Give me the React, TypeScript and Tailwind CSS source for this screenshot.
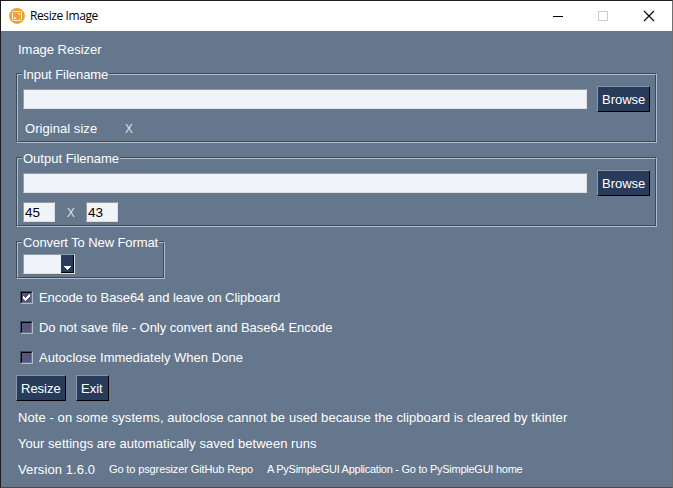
import type { ReactNode } from "react";

function Frame({ title, titleClass, className, children }: { title: string; titleClass: string; className: string; children: ReactNode }) {
  return (
    <section className={`relative ml-[15px] border border-b-[#b1bbc7] border-l-[#3f4a57] border-r-[#b1bbc7] border-t-[#3f4a57] ${className}`}>
      <div className="h-full border border-b-[#3f4a57] border-l-[#b1bbc7] border-r-[#3f4a57] border-t-[#b1bbc7]">{children}</div>
      <h2 className={`absolute -top-[7px] left-[5px] h-4 whitespace-nowrap bg-[#64778d] px-px leading-4 ${titleClass}`}>{title}</h2>
    </section>
  );
}

function Field({ value = "", className }: { value?: string; className: string }) {
  return (
    <div className={`h-5 shrink-0 border border-b-[#dedede] border-l-[#979a9e] border-r-[#dedede] border-t-[#979a9e] bg-[#f0f3f7] pl-px text-[13.5px] leading-[19px] tracking-[-0.1px] text-black ${className}`}>
      {value}
    </div>
  );
}

function Button({ label, className }: { label: string; className: string }) {
  return (
    <button className={`h-[26px] shrink-0 whitespace-nowrap border border-b-black border-l-[#8995a8] border-r-black border-t-[#8995a8] bg-[#283b5b] pl-1 text-left leading-6 text-white ${className}`}>
      <span className="block pt-px leading-[23px]">{label}</span>
    </button>
  );
}

function Check({ label, checked = false, className }: { label: string; checked?: boolean; className: string }) {
  return (
    <label className="flex h-[30px] items-center whitespace-nowrap pl-[19px]">
      <span className="mr-1.5 h-[13px] w-[13px] shrink-0 border border-b-[#b1bbc7] border-l-[#3f4a57] border-r-[#b1bbc7] border-t-[#3f4a57]">
        <span className="block h-[11px] w-[11px] border border-b-[#64778d] border-l-black border-r-[#64778d] border-t-black bg-[#59567b]">
          {checked && (
            <svg viewBox="0 0 9 9" className="h-[9px] w-[9px]" shapeRendering="crispEdges">
              <path d="M1 3h1v1h1v1h1V4h1V3h1V2h1V1h1v3H7v1H6v1H5v1H4v1H3V7H2V6H1z" fill="white" />
            </svg>
          )}
        </span>
      </span>
      <span className={`pt-0.5 ${className}`}>{label}</span>
    </label>
  );
}

export default function App() {
  return (
    <main className="flex h-[488px] w-[673px] flex-col overflow-hidden border border-b-[#4a4a4a] border-l-[#1c1c1e] border-r-[#707070] border-t-[#202020] bg-[#64778d] font-['Liberation_Sans',Arial,sans-serif] text-[13px] text-white">
      <header className="flex h-[30px] shrink-0 items-center bg-white pl-2 text-black">
        <svg viewBox="0 0 16 16" className="h-4 w-4 shrink-0">
          <circle cx="8" cy="8" r="7.9" fill="#e9a136" />
          <rect x="3.5" y="3.5" width="9" height="9" rx="0.8" fill="none" stroke="#fff0d4" strokeWidth="1" />
          <path d="M8.3 5h2.7v2.7zM5 8.3v2.7h2.7z" fill="#fff0d4" />
          <path d="M5.5 6.5l1-1M9.5 10.5l1-1" fill="none" stroke="#f7cf8e" strokeWidth=".8" />
        </svg>
        <h1 className="ml-[5px] grow font-['Open_Sans','Noto_Sans',sans-serif] text-[12px] tracking-[-0.4px]">Resize Image</h1>
        <svg width="104" height="12" viewBox="0 0 104 12" className="mr-[16px] shrink-0" fill="none">
          <path d="M1 6.5h10" stroke="black" />
          <rect x="46.5" y="1.5" width="9" height="9" stroke="#cccccc" />
          <path d="M92 1l10 10M102 1L92 11" stroke="black" strokeWidth="1.1" />
        </svg>
      </header>
      <p className="ml-[17px] mt-[11px] h-4 leading-4 tracking-[-0.02px]">Image Resizer</p>
      <Frame title="Input Filename" titleClass="tracking-[-0.05px]" className="mt-[15px] h-[70px] w-[641px] shrink-0">
        <div className="flex items-center pl-[5px] pt-[11px]">
          <Field className="w-[564px]" />
          <Button label="Browse" className="ml-[10px] w-[53px]" />
        </div>
        <div className="ml-[7px] mt-[9px] flex h-4 leading-4">
          <span className="w-[100px] tracking-[0.05px]">Original size</span>
          <span className="origin-left scale-x-90 text-[#dce1e8]">X</span>
        </div>
      </Frame>
      <Frame title="Output Filename" titleClass="tracking-[0px]" className="mt-[14px] h-[70px] w-[641px] shrink-0">
        <div className="flex items-center pl-[5px] pt-[11px]">
          <Field className="w-[564px]" />
          <Button label="Browse" className="ml-[10px] w-[53px]" />
        </div>
        <div className="ml-[5px] mt-[6px] flex h-5 items-center">
          <Field value="45" className="w-8" />
          <span className="h-5 w-[31px] pl-3 leading-[21px]"><span className="inline-block origin-left scale-x-90 text-[#dce1e8]">X</span></span>
          <Field value="43" className="w-8" />
        </div>
      </Frame>
      <Frame title="Convert To New Format" titleClass="tracking-[-0.09px]" className="mt-[14px] h-[38px] w-[149px] shrink-0">
        <div className="ml-[5px] mt-[11px] flex h-5 w-[52px] justify-end border border-b-[#dedede] border-l-[#979a9e] border-r-[#dedede] border-t-[#979a9e] bg-[#f0f3f7]">
          <button className="flex w-[13px] items-end justify-center border-b border-r border-black bg-[#283b5b] pb-[2px]">
            <svg width="7" height="4" viewBox="0 0 7 4" shapeRendering="crispEdges"><path d="M0 0h7v1H6v1H5v1H4v1H3V3H2V2H1V1H0z" fill="white" /></svg>
          </button>
        </div>
      </Frame>
      <div className="mt-[3px] shrink-0">
        <Check label="Encode to Base64 and leave on Clipboard" checked className="tracking-[-0.06px]" />
        <Check label="Do not save file - Only convert and Base64 Encode" className="tracking-[-0.03px]" />
        <Check label="Autoclose Immediately When Done" className="tracking-[0.03px]" />
      </div>
      <div className="ml-[15px] mt-[3px] flex gap-[10px]">
        <Button label="Resize" className="w-[50px]" />
        <Button label="Exit" className="w-[33px]" />
      </div>
      <footer className="ml-[17px] mt-[9px] whitespace-nowrap leading-4">
        <p className="tracking-[0.08px]">Note - on some systems, autoclose cannot be used because the clipboard is cleared by tkinter</p>
        <p className="mt-[10px] tracking-[0.04px]">Your settings are automatically saved between runs</p>
        <div className="mt-[10px] flex">
          <span className="w-[91px] tracking-[0.1px]">Version 1.6.0</span>
          <a className="-mt-px w-[158px] text-[11px] tracking-[-0.12px]">Go to psgresizer GitHub Repo</a>
          <a className="-mt-px text-[11px] tracking-[-0.26px]">A PySimpleGUI Application - Go to PySimpleGUI home</a>
        </div>
      </footer>
    </main>
  );
}
